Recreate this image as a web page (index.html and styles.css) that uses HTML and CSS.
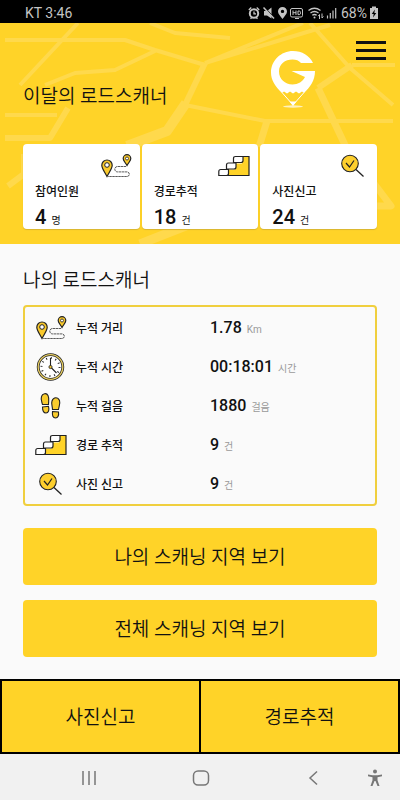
FILE: index.html
```html
<!DOCTYPE html>
<html lang="ko">
<head>
<meta charset="utf-8">
<meta name="viewport" content="width=device-width, initial-scale=1">
<title>로드스캐너</title>
<link rel="stylesheet" href="styles.css">
</head>
<body>
<svg class="sprite" aria-hidden="true">
  <symbol id="icon-route" viewBox="0 0 32 24">
    <path d="M7 22.500C4.500 17.500 1.800 14.500 1.800 11.200a5.200 5.200 0 0 1 10.400 0C12.200 14.500 9.500 17.500 7 22.500z" fill="#f9c92c" stroke="#222" stroke-width="1.200"/>
    <circle cx="7" cy="11" r="2.300" fill="#fff" stroke="#222"/>
    <path d="M27 11.500C25.300 8.500 23.200 6.700 23.200 4.500a3.800 3.800 0 0 1 7.600 0C30.800 6.700 28.700 8.500 27 11.500z" fill="#f9c92c" stroke="#222" stroke-width="1.200"/>
    <circle cx="27" cy="4.500" r="1.500" fill="#fff" stroke="#222" stroke-width=".8"/>
    <path d="M26 12.500h-8.500a2.700 2.700 0 0 0 0 5.400h9.500a2.300 2.300 0 0 1 0 4.600H8" fill="none" stroke="#333" stroke-width=".8" stroke-dasharray="2.500 .5"/>
  </symbol>
  <symbol id="icon-stairs" viewBox="0 0 32 24">
    <path d="M10 21.500v-6h7v-6h7v-7h7v19z" fill="#ffd328"/>
    <path d="M24 2.500h7v19H10" fill="none" stroke="#222" stroke-width="1.200"/>
    <g fill="#fff" stroke="#222" stroke-width="1.200">
      <path d="M15.500 8.500V4.500q0-2 2-2H25V6.500q0 2-2 2z"/>
      <path d="M8.500 15V11q0-2 2-2H18v4q0 2-2 2z"/>
      <path d="M.8 21.500v-4q0-2 2-2h7.700v4q0 2-2 2z"/>
    </g>
  </symbol>
  <symbol id="icon-search" viewBox="0 0 32 24">
    <circle cx="13" cy="9.500" r="8.300" fill="#fdcf2e" stroke="#222" stroke-width="1.100"/>
    <path d="M9 9l3.500 4L17 6.500" fill="none" stroke="#222" stroke-width="1.200"/>
    <path d="M19 15.500l7.500 7" stroke="#222" stroke-width="1.300"/>
  </symbol>
  <symbol id="icon-clock" viewBox="0 0 32 28">
    <circle cx="15.500" cy="14" r="12.300" fill="#fff" stroke="#222" stroke-width="2.800"/>
    <circle cx="15.500" cy="14" r="12.300" fill="none" stroke="#e9cf63" stroke-width="1.300"/>
    <circle cx="15.500" cy="14" r="9" fill="none" stroke="#222" stroke-width="2" stroke-dasharray="1 3.710"/>
    <path d="M15.500 5v9l6 6" fill="none" stroke="#222" stroke-width="1.100"/>
    <circle cx="15.500" cy="14" r="1.600" fill="#e5bd32" stroke="#222" stroke-width=".8"/>
  </symbol>
  <symbol id="icon-steps" viewBox="0 0 32 28">
    <g fill="#f9cc2c" stroke="#222" stroke-width="1.100">
      <path d="M7.500 12.500C6.500 9 5.500 7 6.500 4.500C7.500 1.500 11.500.5 13 3.500C14.500 6.500 13.500 9 13.500 12.500z"/>
      <path d="M7.500 15l6-.7C14.500 18 13.500 21 11 21S7.500 18 7.500 15z"/>
      <path d="M17.500 17.500c0-3.500-1.500-5.500-.5-8.500c1.500-4.500 6-4 7.500-.5c1 3-.5 5.500-1 9z"/>
      <path d="M17.500 19.500l6 .5c.5 3.500-.5 6-3 6s-3.500-2.500-3-6.500z"/>
    </g>
  </symbol>
</svg>

<div class="status-bar">
  <span>KT 3:46</span>
  <div class="status-right">
    <svg class="status-icons" viewBox="0 0 90 14" aria-hidden="true">
      <g fill="none" stroke="#c4c4c4" stroke-width="1.300">
        <circle cx="6" cy="7.500" r="4.200" stroke-width="2"/><path d="M6 5.500v2.300h2M.8 4l2.500-2.500M11.200 4L8.700 1.500M2.500 12.800l1.300-1.300M9.500 12.800l-1.300-1.300"/>
        <rect x="42.500" y="2.500" width="12" height="8.500" rx="1.500" stroke-width="1"/>
        <path d="M45 4.500v4.500M48 4.500v4.500M45 6.700H48M50 5h1.300q1.200 0 1.200 1.800t-1.200 1.800h-1.300zM47 12.500h4" stroke-width="1"/>
        <path d="M60.500 4.500q6-4.500 12 0M62.500 7q4-3 8 0M64.300 9.300q2.200-1.600 4.400 0"/>
        <path d="M71.500 13V8.500l-1.300 1.700M74 7.500V12l1.400-1.500" stroke-width="1"/>
        <path d="M79.500 12.500v-3M82.300 12.500v-5.500M85 12.500v-8M87.700 12.500V2" stroke-width="1.200"/>
      </g>
      <g fill="#c4c4c4">
        <path d="M16 5h3l4.500-3.500v11L19 9.500h-3z"/>
        <path d="M34.500 13C32 9.500 30 7.800 30 5.500a4.500 4.500 0 0 1 9 0C39 7.800 37 9.500 34.500 13zM34.500 3.700a1.700 1.700 0 1 0 0 3.400a1.700 1.700 0 0 0 0-3.400z" fill-rule="evenodd"/>
        <circle cx="66.500" cy="11.500" r="1"/>
      </g>
      <path d="M16.800 1.500l10 10.500" stroke="#000" stroke-width="1"/>
      <path d="M15.500 1.500l10.500 11" stroke="#c4c4c4" stroke-width="1.500"/>
    </svg>
    <span>68%</span>
    <svg class="battery" viewBox="0 0 8 14" aria-hidden="true">
      <path d="M0 2h2V.5h4V2h2v11H0z" fill="#c4c4c4"/><path d="M4.800 3.500L1.800 8h1.900l-.7 3.500L6.300 7H4.400z" fill="#000"/>
    </svg>
  </div>
</div>

<header class="hero">
  <svg class="map" viewBox="0 0 400 221" preserveAspectRatio="xMidYMid slice" aria-hidden="true">
    <g fill="none" stroke="#ffd94c" stroke-linejoin="round">
      <path stroke-width="4" d="M78 0L20 62M5 17h120l30 10 50 15M45 62l30-12 40-3 40-19M150 0l25 10 55 5M303 0l-98 40M205 40l125-38M310 0l40 45 43 37M395 42h-43M5 92h52M185 82l80 16h128"/>
      <path stroke-width="6" d="M5 115h45L68 85M352 42l-34 23M8 163l16-12v-20"/>
      <path stroke-width="7" d="M318 65l27 57 46 61h-23M267 98l-8 26"/>
      <path stroke-width="6" d="M205 40l-20 42"/>
      <path stroke-width="10" d="M186 80l-19 28-40 15"/>
      <path stroke-width="9" d="M140 221l56-22"/>
    </g>
  </svg>
  <div class="hero-head">
    <h1 class="title">이달의 로드스캐너</h1>
    <svg class="logo" viewBox="0 0 46 58" role="img" aria-label="G">
      <path fill="#fff" d="M43 13C39.500 5.500 32 1 23 1C11 1 1 10.500 1 22.500C1 30 5 36 12 43L14 41.500 17 43.500 20 41.500 23 43.500 26 41.500 29 43.500 32 41.500 34 43C40 37 45 31 45 21H21.500L35 27C33 31.500 28 34.500 22.500 34.500C15 34.500 9 29 9 21.500C9 14 15 9.500 22.500 9.500C26 9.500 29 10.500 31 13z"/>
      <path d="M12 42.500l11 12.500 11-12.500" fill="none" stroke="#fff" stroke-width="1"/>
      <path d="M19.500 51.500h7L23 56z" fill="#fff"/>
      <ellipse cx="23" cy="56.500" rx="10" ry="1.200" fill="#fff" opacity=".7"/>
    </svg>
    <button class="menu" type="button" aria-label="메뉴"><span></span><span></span><span></span></button>
  </div>
  <div class="cards">
    <section class="card">
      <svg class="icon" aria-hidden="true"><use href="#icon-route"/></svg>
      <h2>참여인원</h2>
      <p><strong>4</strong> <span>명</span></p>
    </section>
    <section class="card">
      <svg class="icon" aria-hidden="true"><use href="#icon-stairs"/></svg>
      <h2>경로추적</h2>
      <p><strong>18</strong> <span>건</span></p>
    </section>
    <section class="card">
      <svg class="icon" aria-hidden="true"><use href="#icon-search"/></svg>
      <h2>사진신고</h2>
      <p><strong>24</strong> <span>건</span></p>
    </section>
  </div>
</header>

<main class="main">
  <h2 class="title">나의 로드스캐너</h2>
  <dl class="stats">
    <div class="row"><svg class="icon" aria-hidden="true"><use href="#icon-route"/></svg><dt>누적 거리</dt><dd><strong>1.78</strong><span>Km</span></dd></div>
    <div class="row"><svg class="icon tall" aria-hidden="true"><use href="#icon-clock"/></svg><dt>누적 시간</dt><dd><strong>00:18:01</strong><span>시간</span></dd></div>
    <div class="row"><svg class="icon tall" aria-hidden="true"><use href="#icon-steps"/></svg><dt>누적 걸음</dt><dd><strong>1880</strong><span>걸음</span></dd></div>
    <div class="row"><svg class="icon" aria-hidden="true"><use href="#icon-stairs"/></svg><dt>경로 추적</dt><dd><strong>9</strong><span>건</span></dd></div>
    <div class="row"><svg class="icon" aria-hidden="true"><use href="#icon-search"/></svg><dt>사진 신고</dt><dd><strong>9</strong><span>건</span></dd></div>
  </dl>
  <div class="actions">
    <button class="action" type="button">나의 스캐닝 지역 보기</button>
    <button class="action" type="button">전체 스캐닝 지역 보기</button>
  </div>
</main>

<div class="tabs">
  <button type="button">사진신고</button>
  <button type="button">경로추적</button>
</div>

<nav class="system-nav">
  <button type="button" aria-label="최근 앱"><svg viewBox="0 0 18 18"><path d="M3 2v14M9 2v14M15 2v14"/></svg></button>
  <button type="button" aria-label="홈"><svg viewBox="0 0 18 18"><rect x="1.500" y="2" width="15" height="14" rx="4.500"/></svg></button>
  <button type="button" aria-label="뒤로"><svg viewBox="0 0 18 18"><path d="M13 2.500L6 9l7 6.500"/></svg></button>
  <button class="access" type="button" aria-label="접근성"><svg viewBox="0 0 18 18"><circle cx="9" cy="2.500" r="2"/><path d="M2 5.500l4.500.8h5l4.500-.8v1.700l-4.500 1v3L13.500 17h-2L9.500 12h-1L6.500 17h-2L6.500 11.200v-3L2 7.200z"/></svg></button>
</nav>
</body>
</html>
```
FILE: styles.css
```css
* {
  box-sizing: border-box;
}

body {
  margin: 0;
  min-height: 100vh;
  display: flex;
  flex-direction: column;
  background: #fafafa;
  color: #111;
  font-family: Roboto, "Noto Sans CJK KR", sans-serif;
}

h1, h2, p, dl, dd {
  margin: 0;
}

button {
  margin: 0;
  padding: 0;
  border: 0;
  background: none;
  color: inherit;
  font: inherit;
}

svg {
  display: block;
}

.sprite {
  position: absolute;
  width: 0;
  height: 0;
}

.status-bar {
  display: flex;
  justify-content: space-between;
  align-items: center;
  height: 23px;
  padding: 2px 22px 0 25px;
  background: #000;
  color: #c4c4c4;
  font-size: 14px;
  line-height: 20px;
}

.status-right {
  display: flex;
  align-items: center;
  gap: 3px;
}

.status-icons {
  width: 90px;
  height: 14px;
}

.battery {
  width: 8px;
  height: 14px;
}

.hero {
  position: relative;
  padding-bottom: 15px;
  background: #ffd328;
}

.map {
  position: absolute;
  inset: 0;
  width: 100%;
  height: 100%;
}

.hero-head {
  position: relative;
  display: flex;
  align-items: flex-start;
  height: 121px;
  padding: 0 14px 0 23px;
}

.title {
  font-size: 19px;
  font-weight: 350;
  line-height: 28px;
}

.hero-head .title {
  flex: 1;
  padding-top: 60px;
}

.logo {
  width: 46px;
  height: 58px;
  margin: 27px 40px 0 0;
}

.menu {
  display: flex;
  flex-direction: column;
  gap: 5px;
  width: 30px;
  margin-top: 18px;
}

.menu span {
  height: 3px;
  background: #111;
}

.cards {
  position: relative;
  display: grid;
  grid-template-columns: repeat(3, 1fr);
  gap: 2px;
  padding: 0 23px;
}

.card {
  height: 85px;
  padding: 10px 8px 0 12px;
  border-radius: 4px;
  background: #fff;
  box-shadow: 0 1px 1px #d9b530;
}

.icon {
  width: 32px;
  height: 24px;
}

.icon.tall {
  height: 28px;
}

.card .icon {
  margin-left: auto;
}

.card h2 {
  margin-top: 4px;
  font-size: 12px;
  font-weight: 500;
  line-height: 20px;
}

.card p {
  display: flex;
  align-items: baseline;
  gap: 5px;
  margin-top: 3px;
  font-size: 10px;
  line-height: 24px;
}

.card strong {
  font-size: 20px;
  font-weight: 500;
}

.main {
  flex: 1;
  padding: 23px 23px 22px;
}

.stats {
  margin-top: 10px;
  padding: 1px 10px;
  border: 2px solid #f0cf3e;
  border-radius: 4px;
}

.row {
  display: grid;
  grid-template-columns: 32px 125px 1fr;
  column-gap: 9px;
  align-items: center;
  height: 39px;
}

.row dt {
  font-size: 12px;
  font-weight: 500;
}

.row dd {
  display: flex;
  align-items: baseline;
  gap: 5px;
  padding-top: 2px;
  color: #999;
  font-size: 10px;
  line-height: 24px;
}

.row strong {
  color: #111;
  font-size: 16px;
  font-weight: 500;
}

.actions {
  display: flex;
  flex-direction: column;
  gap: 15px;
  margin-top: 22px;
}

.action {
  height: 57px;
  padding-bottom: 2px;
  border-radius: 4px;
  background: #ffd328;
  font-size: 19px;
  font-weight: 350;
}

.tabs {
  display: grid;
  grid-template-columns: 1fr 1fr;
  gap: 2px;
  height: 75px;
  padding: 2px;
  background: #000;
}

.tabs button {
  padding-bottom: 2px;
  background: #ffd328;
  font-size: 19px;
  font-weight: 350;
}

.system-nav {
  display: grid;
  grid-template-columns: 1fr 1fr 1fr 12px;
  align-items: center;
  height: 46px;
  padding: 2px 19px 0 33px;
  background: #f1f1f1;
}

.system-nav button {
  display: flex;
  justify-content: center;
}

.system-nav svg {
  flex: none;
  width: 18px;
  height: 18px;
  fill: none;
  stroke: #777;
  stroke-width: 1.500;
}

.system-nav .access svg {
  fill: #777;
  stroke: none;
}
```
